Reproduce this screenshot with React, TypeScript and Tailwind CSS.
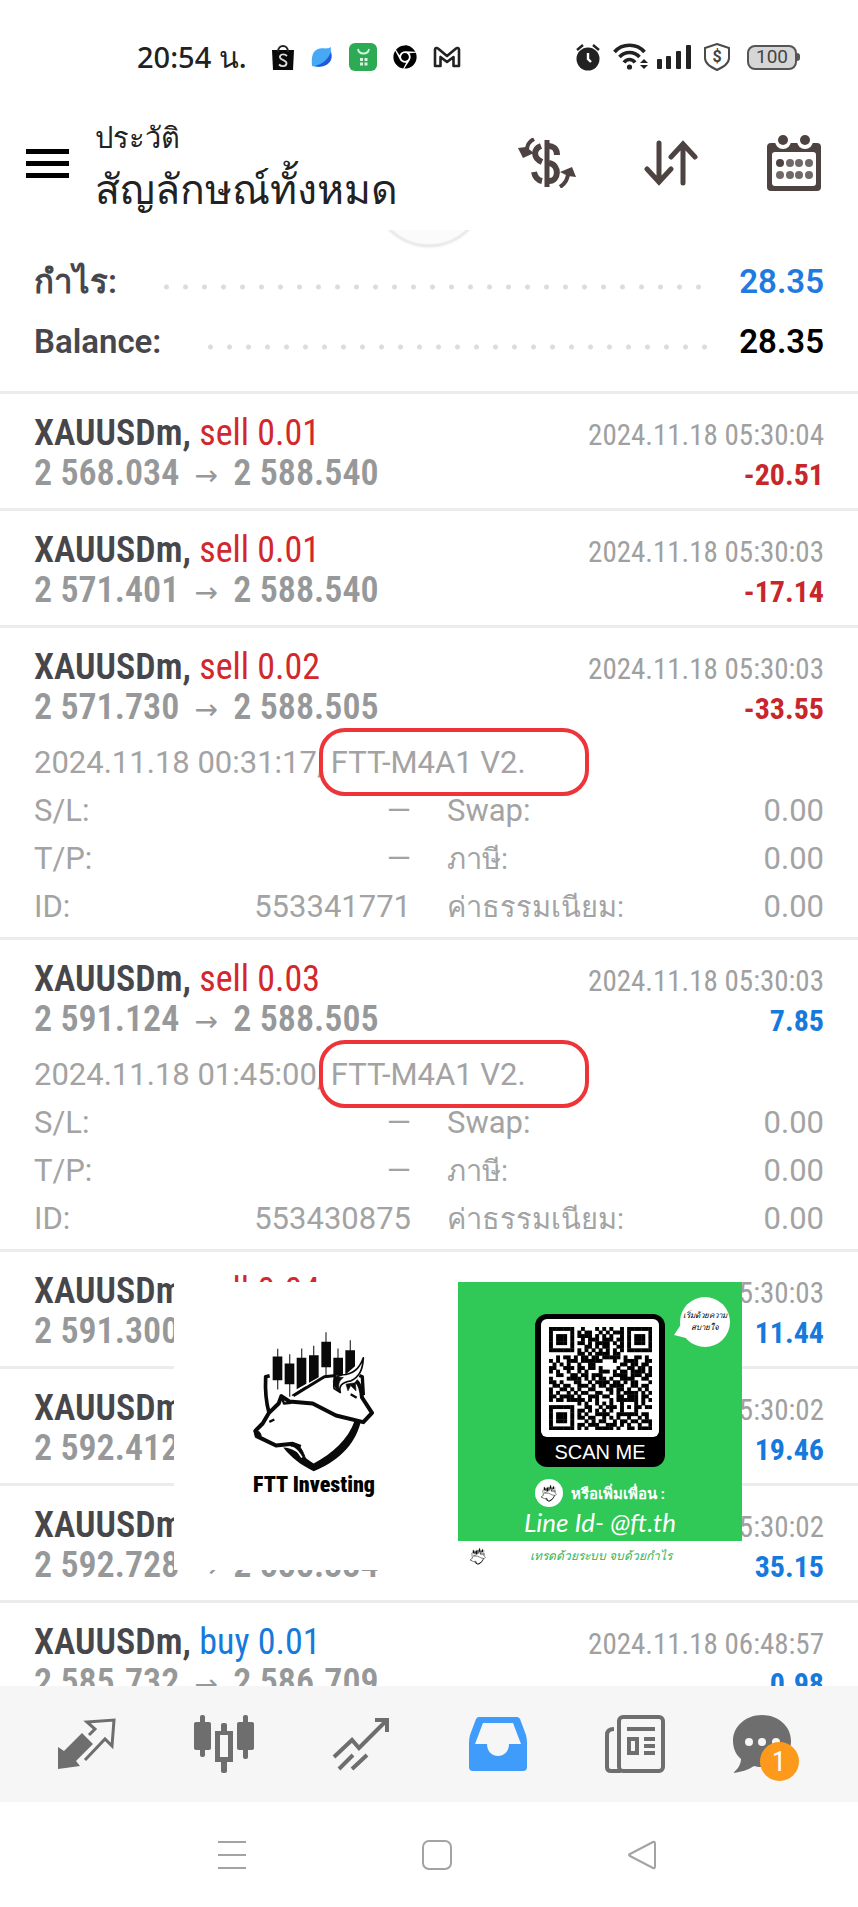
import type { ReactNode } from "react";
import { FaChrome } from "react-icons/fa";

interface Deal {
  readonly id: string;
  readonly side: "sell" | "buy";
  readonly volume: string;
  readonly open: string;
  readonly close: string;
  readonly time: string;
  readonly profit: string;
  readonly details?: {
    readonly openTime: string;
    readonly comment: string;
    readonly ticket: string;
  };
}

const DEALS: readonly Deal[] = [
  { id: "d1", side: "sell", volume: "0.01", open: "2 568.034", close: "2 588.540", time: "2024.11.18 05:30:04", profit: "-20.51" },
  { id: "d2", side: "sell", volume: "0.01", open: "2 571.401", close: "2 588.540", time: "2024.11.18 05:30:03", profit: "-17.14" },
  {
    id: "d3", side: "sell", volume: "0.02", open: "2 571.730", close: "2 588.505", time: "2024.11.18 05:30:03", profit: "-33.55",
    details: { openTime: "2024.11.18 00:31:17,", comment: "FTT-M4A1 V2.", ticket: "553341771" },
  },
  {
    id: "d4", side: "sell", volume: "0.03", open: "2 591.124", close: "2 588.505", time: "2024.11.18 05:30:03", profit: "7.85",
    details: { openTime: "2024.11.18 01:45:00,", comment: "FTT-M4A1 V2.", ticket: "553430875" },
  },
  { id: "d5", side: "sell", volume: "0.04", open: "2 591.300", close: "2 588.440", time: "2024.11.18 05:30:03", profit: "11.44" },
  { id: "d6", side: "sell", volume: "0.05", open: "2 592.412", close: "2 588.520", time: "2024.11.18 05:30:02", profit: "19.46" },
  { id: "d7", side: "sell", volume: "0.08", open: "2 592.728", close: "2 588.334", time: "2024.11.18 05:30:02", profit: "35.15" },
  { id: "d8", side: "buy", volume: "0.01", open: "2 585.732", close: "2 586.709", time: "2024.11.18 06:48:57", profit: "0.98" },
];

const QR_ROWS: readonly string[] = [
  "#######..#...#.#.#..#.#######",
  "#.....#.#.##..#.#.###.#.....#",
  "#.###.#.####.#.#.#..#.#.###.#",
  "#.###.#..#.###.###.##.#.###.#",
  "#.###.#.##.#.####.#.#.#.###.#",
  "#.....#...##.#.##..##.#.....#",
  "#######.#.#.#.#.#.#.#.#######",
  "........##.#.####.##.........",
  "..#.##.#.##.##.#####.#..##.#.",
  "#.#..###.######...#..####..##",
  ".#.#.#..#..##.......##.##.##.",
  "##..###.##.##.#....#..##.##.#",
  "#.#..#..#.#...###.#.##.####.#",
  "..##..##.##.###...####.###.##",
  "#....####.#.#.##.#..####..##.",
  "##.#...##..#.####.##.#.##...#",
  ".##.##..###.#.##.####..##.##.",
  "#..##.#.#..##...##.##.#..#.#.",
  "#.#..#.#.##..##..#.#.####.#.#",
  "##.####.#..###.##..##.###.##.",
  "#.##.#####.#.#...#.######.#.#",
  "........#.#..#.#.#..#...#.#..",
  "#######...##..#.###.#.#.##.##",
  "#.....#.##.#.#.#.#..#...#....",
  "#.###.#.#.#..####..######.##.",
  "#.###.#.##.##..#.#.#..#..#.#.",
  "#.###.#...#.#.##..#.##.##.###",
  "#.....#.##.###..###.#.#..#..#",
  "#######.#.#..#####.#..##.####",
];

function QrCode() {
  return (
    <svg viewBox="0 0 29 29" className="size-[103px]" role="img" aria-label="QR">
      {QR_ROWS.map((row, y) =>
        row.split("").map((cell, x) =>
          cell === "#" ? <rect key={`${x}-${y}`} x={x} y={y} width="1.100" height="1.100" fill="#000" /> : null
        )
      )}
    </svg>
  );
}

function BearBullLogo({ className }: { readonly className: string }) {
  return (
    <svg viewBox="275 210 378 428" className={className} fill="none" stroke="#0a0a0a" strokeLinejoin="round" aria-hidden="true">
      <g strokeWidth="4" stroke="#444">
        <path d="M355 266V388M391 282V410M427 265V300M463 257V300M500 216V348M536 265V300M573 240V290" />
      </g>
      <g fill="#0a0a0a" stroke="none">
        <path d="M340 289h29v71h-29zM376 310h29v62h-29zM412 293h29v78l-29 16zM449 285h29v66l-29 17zM486 245h29v76h-29zM522 293h29v54h-29zM558 270h29v48l-29 26z" />
        <path d="M372 562C400 560 440 596 463 610C520 580 565 540 586 482L604 486C585 560 530 605 463 633C425 615 395 592 372 562Z" />
      </g>
      <path d="M331 347L319 350C317 390 320 425 329 458" strokeWidth="11" />
      <path d="M402 407L495 350L530 346" strokeWidth="9" />
      <path d="M398 406L440 380" strokeWidth="4" />
      <path d="M600 346L609 350L612 405" strokeWidth="10" />
      <path d="M590 362C600 370 606 385 608 412L638 458L612 486L530 466L460 430L390 424L366 408L358 430L329 458L310 490L288 512L292 528L350 556L400 551L424 560" strokeWidth="12" />
      <path d="M524 385C520 350 535 345 560 343C590 335 602 320 612 293C610 330 600 350 575 362C545 366 538 380 543 397Z" fill="#fff" strokeWidth="5" />
      <path d="M524 350C518 372 526 385 543 397C534 376 538 362 552 352Z" fill="#0a0a0a" strokeWidth="2" />
      <path d="M560 372L566 392L574 376L590 392L588 368Z" fill="#0a0a0a" strokeWidth="2" />
      <path d="M574 402L592 413" strokeWidth="7" />
      <path d="M366 408L374 430L396 428" strokeWidth="7" />
      <path d="M330 485L345 478" strokeWidth="7" />
      <path d="M284 512L300 515L306 526L290 530Z" fill="#0a0a0a" strokeWidth="3" />
      <path d="M400 548C424 556 430 570 440 600C420 580 418 566 392 556Z" fill="#0a0a0a" strokeWidth="3" />
      <path d="M398 562C414 566 418 580 428 592" stroke="#fff" strokeWidth="5" />
    </svg>
  );
}

function StatusBar() {
  return (
    <div className="flex h-[114px] shrink-0 items-center pl-[137px] pr-[58px] text-[#222]">
      <span className="mr-6 font-['Noto_Sans'] text-[29px] font-medium leading-10">20:54 น.</span>
      <svg viewBox="0 0 24 27" className="mr-4 h-[27px] w-6" aria-hidden="true">
        <path d="M1 6h22l-1 20H2z" fill="#0a0a0a" />
        <path d="M7 8C7 0 17 0 17 8" fill="none" stroke="#222" strokeWidth="2" />
        <path d="M16 12C13 9 8.500 10.500 9 13.500C9.500 16.500 16 16 15.500 19.500C15 23 10 22.500 8 20.500" fill="none" stroke="#ddd" strokeWidth="1.800" />
      </svg>
      <svg viewBox="0 0 22 22" className="mr-4 size-[22px]" aria-hidden="true">
        <path d="M1 20C0 10 2 5 7 3C11 1 15 4 20 1C19 5 22 10 19 15C15 21 8 22 1 20Z" fill="#45a9f5" />
        <path d="M20 6C22 13 19 17 15 19C11 21 6 21 4 20C12 18 17 13 20 6Z" fill="#2458dc" />
      </svg>
      <svg viewBox="0 0 28 28" className="mr-4 size-7" aria-hidden="true">
        <rect width="28" height="28" rx="6" fill="#2cab54" />
        <path d="M9 6C10 12 19 12 20 6" fill="none" stroke="#d6f3df" strokeWidth="1.800" />
        <path d="M11 15h3v3h-3zM15.500 15h3v3h-3zM11 19.500h3v3h-3zM15.500 19.500h3v3h-3z" fill="#d6f3df" />
      </svg>
      <FaChrome className="mr-4 size-6 text-black" />
      <svg viewBox="0 0 28 22" className="h-[22px] w-7" fill="none" stroke="#222" strokeWidth="2.600" strokeLinejoin="round" aria-hidden="true">
        <path d="M2 3.500C2 2 4 1.500 5 2.500L14 10L23 2.500C24 1.500 26 2 26 3.500V20H20.500V11L14 16L7.500 11V20H2Z" />
      </svg>
      <div className="ml-auto flex items-center gap-3">
        <svg viewBox="0 0 26 28" className="h-7 w-[26px]" aria-hidden="true">
          <circle cx="13" cy="16" r="11.500" fill="#222" />
          <path d="M2 7L8 2M24 7L18 2" stroke="#222" strokeWidth="2.400" />
          <path d="M13 10V16L16 19" fill="none" stroke="#fff" strokeWidth="2.400" />
        </svg>
        <svg viewBox="0 0 36 28" className="-mr-1 h-7 w-9" fill="none" stroke="#222" strokeWidth="3.600" aria-hidden="true">
          <path d="M1.500 9C9 0 24 0 31.500 9M6.500 14C12 8 21 8 26.500 14M11 19.500C14 15.500 19 15.500 22 19.500" />
          <circle cx="16.500" cy="24" r="2.600" fill="#222" stroke="none" />
          <path d="M27 20L31 16L35 20ZM27 22L31 26L35 22Z" fill="#222" stroke="none" />
        </svg>
        <svg viewBox="0 0 34 26" className="h-[26px] w-[34px]" fill="#222" aria-hidden="true">
          <rect x="0" y="15" width="5" height="10" rx="1" />
          <rect x="9" y="12" width="5" height="13" rx="1" />
          <rect x="19" y="7" width="5" height="18" rx="1" />
          <rect x="29" y="1" width="5" height="24" rx="1" />
        </svg>
        <div className="relative flex h-7 w-7 items-center justify-center">
          <svg viewBox="0 0 28 28" className="absolute inset-0 size-7" fill="none" stroke="#4a4a4a" strokeWidth="2" aria-hidden="true">
            <path d="M14 1L26 5V15C26 21 20 24 14 27C8 24 2 21 2 15V5Z" />
          </svg>
          <span className="font-['Roboto'] text-[16px] font-bold leading-5 text-[#444]">$</span>
        </div>
        <div className="ml-1 flex items-center">
          <span className="flex h-[25px] w-[50px] items-center justify-center rounded-lg border-2 border-[#555] bg-[#d6d6d6] font-['Roboto'] text-[19px] leading-5 text-[#444]">
            100
          </span>
          <span className="h-2 w-[3px] rounded-r bg-[#555]" />
        </div>
      </div>
    </div>
  );
}

function AppHeader() {
  return (
    <header className="flex h-[116px] shrink-0 items-center pl-[26px] pr-9 pb-[18px]">
      <button type="button" aria-label="Menu" className="flex w-[43px] flex-col gap-[7px]">
        <span className="h-[5px] bg-black" />
        <span className="h-[5px] bg-black" />
        <span className="h-[5px] bg-black" />
      </button>
      <div className="ml-[26px] font-['Noto_Sans'] text-[#222]">
        <p className="text-[29px] leading-[50px]">ประวัติ</p>
        <h1 className="text-[41px] leading-[52px]">สัญลักษณ์ทั้งหมด</h1>
      </div>
      <div className="ml-auto flex items-center text-[#4d4341]">
        <button type="button" aria-label="Currency">
          <svg viewBox="0 0 58 50" className="h-[50px] w-[58px]" fill="none" stroke="currentColor" strokeWidth="6" aria-hidden="true">
            <path d="M29 2V49" strokeWidth="5" />
            <path d="M39 17C39 10 34 8 31 8M23 8C15 11 15 20 24 24M31 25C42 27 41 43 31 43M24 43C19 42 17 39 16 34" />
            <path d="M16 1C10 4 9 8 9 12" strokeWidth="4" />
            <path d="M0 10L5 20L16 15L8 9Z" fill="currentColor" stroke="none" />
            <path d="M42 49C48 45 49 41 50 37" strokeWidth="4" />
            <path d="M42 34L54 29L58 39L50 38Z" fill="currentColor" stroke="none" />
          </svg>
        </button>
        <button type="button" aria-label="Sort" className="ml-[68px]">
          <svg viewBox="0 0 54 46" className="h-[46px] w-[54px]" fill="none" stroke="currentColor" strokeWidth="5" strokeLinecap="round" aria-hidden="true">
            <path d="M15 3V42M3 29L15 42L27 29M39 43V4M27 17L39 4L51 17" />
          </svg>
        </button>
        <button type="button" aria-label="Calendar" className="ml-[68px]">
          <svg viewBox="0 0 56 58" className="h-[58px] w-14" fill="currentColor" aria-hidden="true">
            <path fillRule="evenodd" d="M5 9H51Q55 9 55 13V53Q55 57 51 57H5Q1 57 1 53V13Q1 9 5 9ZM9 18Q6 18 6 21V49Q6 52 9 52H47Q50 52 50 49V21Q50 18 47 18Z" />
            <circle cx="17" cy="7" r="8" fill="#fff" />
            <circle cx="39" cy="7" r="8" fill="#fff" />
            <circle cx="17" cy="6" r="5" />
            <circle cx="39" cy="6" r="5" />
            {[14, 24, 33, 43].map((x) => (
              <g key={x}>
                <circle cx={x} cy="29" r="4" opacity={x === 14 ? 1 : 0.8} />
                <circle cx={x} cy="41" r="4" opacity="0.8" />
              </g>
            ))}
          </svg>
        </button>
      </div>
    </header>
  );
}

function SummaryRow({ label, value, valueClass }: { readonly label: string; readonly value: string; readonly valueClass: string }) {
  return (
    <div className="flex h-[60px] items-center text-[33px] font-semibold leading-[60px]">
      <span className="text-[#47474b]">{label}</span>
      <span className="ml-10 mr-7 mt-[10px] h-[6px] flex-1 bg-[radial-gradient(circle,#dcdcdc_2px,transparent_3px)] bg-[length:19px_6px] bg-repeat-x" />
      <span className={valueClass}>{value}</span>
    </div>
  );
}

function DetailCell({ label, value, thai = false }: { readonly label: string; readonly value: string; readonly thai?: boolean }) {
  return (
    <div className="flex h-12 justify-between">
      <dt className={thai ? "text-[29px]" : ""}>{label}</dt>
      <dd>{value}</dd>
    </div>
  );
}

function DealRow({ deal }: { readonly deal: Deal }) {
  return (
    <li className="border-b-[3px] border-[#ececec] px-[34px] pt-[19px] font-['Roboto_Condensed',Roboto,sans-serif]">
      <div className="flex h-10 items-baseline justify-between leading-10">
        <span className="text-[36px] font-semibold text-[#47474b]">
          XAUUSDm,{" "}
          <span className={deal.side === "sell" ? "font-normal text-[#d2282d]" : "font-normal text-[#1779dc]"}>
            {deal.side} {deal.volume}
          </span>
        </span>
        <span className="text-[29px] text-[#a0a0a0]">{deal.time}</span>
      </div>
      <div className="flex h-10 items-baseline justify-between font-semibold leading-10">
        <span className="text-[36px] text-[#969899]">
          {deal.open} <span className="mx-[7px] font-['DejaVu_Sans'] text-[28px] font-normal leading-8">→</span> {deal.close}
        </span>
        <span className={deal.profit.startsWith("-") ? "text-[30px] font-bold text-[#c8262b]" : "text-[30px] font-bold text-[#1779dc]"}>
          {deal.profit}
        </span>
      </div>
      {deal.details ? (
        <div className="pb-[6px] pt-3 font-['Roboto'] text-[31px] leading-[48px] text-[#a3a3a3]">
          <p className="h-12">
            {deal.details.openTime}{" "}
            <span className="relative inline-block">
              {deal.details.comment}
              <span className="absolute -left-3 -top-[11px] h-[68px] w-[270px] rounded-[26px] border-4 border-[#ee3438]" />
            </span>
          </p>
          <dl className="grid grid-cols-2 gap-x-9">
            <DetailCell label="S/L:" value="—" />
            <DetailCell label="Swap:" value="0.00" />
            <DetailCell label="T/P:" value="—" />
            <DetailCell label="ภาษี:" value="0.00" thai />
            <DetailCell label="ID:" value={deal.details.ticket} />
            <DetailCell label="ค่าธรรมเนียม:" value="0.00" thai />
          </dl>
        </div>
      ) : (
        <div className="h-[15px]" />
      )}
    </li>
  );
}

function PromoCard() {
  return (
    <aside className="absolute left-[174px] right-[116px] top-[1052px] flex h-[288px] bg-white">
      <div className="flex flex-1 flex-col items-center pr-1 pt-12">
        <BearBullLogo className="h-[143px] w-[126px]" />
        <p className="font-['Roboto_Condensed',Roboto,sans-serif] text-[22px] font-black leading-6 text-black">FTT Investing</p>
      </div>
      <div className="w-[284px]">
        <div className="relative flex h-[259px] flex-col items-center bg-[#30c857] pt-8 text-white">
          <div className="flex w-[130px] flex-col items-center rounded-xl bg-black p-[5px] pb-0">
            <div className="flex size-[118px] items-center justify-center rounded-md bg-white">
              <QrCode />
            </div>
            <p className="font-['Liberation_Sans'] text-[20px] leading-[30px]">SCAN ME</p>
          </div>
          <div className="mt-3 flex h-7 items-center gap-2">
            <span className="flex size-7 items-center justify-center rounded-full bg-white">
              <BearBullLogo className="h-[18px] w-4" />
            </span>
            <span className="font-['Noto_Sans'] text-[15px] font-semibold leading-7">หรือเพิ่มเพื่อน :</span>
          </div>
          <p className="font-['Lato'] text-[26px] italic leading-[30px]">Line Id- @ft.th</p>
          <div className="absolute right-3 top-[15px] flex h-[50px] w-[50px] items-center justify-center">
            <svg viewBox="0 0 56 50" className="absolute right-0 top-0 h-[50px] w-14" fill="#fff" aria-hidden="true">
              <circle cx="31" cy="25" r="25" />
              <path d="M8 26L0 38L16 42Z" />
            </svg>
            <div className="relative flex flex-col items-center whitespace-nowrap text-[8px] font-medium italic leading-3 text-black">
              <span>เริ่มด้วยความ</span>
              <span>สบายใจ</span>
            </div>
          </div>
        </div>
        <div className="flex h-[29px] items-center pl-3">
          <BearBullLogo className="h-[18px] w-4" />
          <p className="ml-11 text-[12px] font-medium italic leading-7 text-[#2fb457]">เทรดด้วยระบบ จบด้วยกำไร</p>
        </div>
      </div>
    </aside>
  );
}

function TabButton({ label, children }: { readonly label: string; readonly children: ReactNode }) {
  return (
    <button type="button" aria-label={label} className="flex flex-1 items-center justify-center text-[#6e6e6e]">
      {children}
    </button>
  );
}

function TabBar() {
  return (
    <nav className="flex h-[116px] shrink-0 bg-[#f6f6f6] px-[18px]">
      <TabButton label="Quotes">
        <svg viewBox="0 0 60 52" className="h-[52px] w-[60px]" fill="none" stroke="currentColor" strokeWidth="3" aria-hidden="true">
          <path d="M1 29L7 33L25 15L36 26L19 43L23 48L1 51Z" fill="currentColor" stroke="none" />
          <path d="M32 17L38 11L30 4L57 2L55 28L48 21L28 42" />
        </svg>
      </TabButton>
      <TabButton label="Charts">
        <svg viewBox="0 0 60 60" className="size-[60px]" fill="currentColor" aria-hidden="true">
          <rect x="6" y="1" width="5" height="42" rx="2" />
          <rect x="0" y="8" width="17" height="28" rx="2" />
          <rect x="49" y="1" width="5" height="44" rx="2" />
          <rect x="43" y="8" width="17" height="28" rx="2" />
          <rect x="27" y="9" width="6" height="10" rx="2" />
          <rect x="27" y="46" width="6" height="13" rx="2" />
          <path fillRule="evenodd" d="M21 17h18v31H21zM26 21v22h8V21z" />
        </svg>
      </TabButton>
      <TabButton label="Trade">
        <svg viewBox="0 0 58 54" className="h-[54px] w-[58px]" fill="none" stroke="currentColor" strokeWidth="4" aria-hidden="true">
          <path d="M2 40L20 23L27 31L54 4M43 3H55V15M7 52L21 38M20 52L35 38" />
        </svg>
      </TabButton>
      <TabButton label="History">
        <svg viewBox="0 0 58 54" className="h-[54px] w-[58px]" aria-hidden="true">
          <path fillRule="evenodd" d="M10 0H48Q50 0 51 2L57 18Q58 22 58 26V50Q58 54 54 54H4Q0 54 0 50V26Q0 22 1 18L7 2Q8 0 10 0ZM14 6L6 27H18C18 43 40 43 40 27H52L44 6Z" fill="#409cfb" />
        </svg>
      </TabButton>
      <TabButton label="News">
        <svg viewBox="0 0 60 58" className="h-[58px] w-[60px]" fill="none" stroke="currentColor" strokeWidth="4" aria-hidden="true">
          <rect x="14" y="2" width="44" height="54" rx="4" />
          <path d="M9 14Q2 14 2 20V52Q2 56 6 56H16" />
          <path d="M22 14H50M39 24H50M39 31H50M39 38H50" />
          <rect x="24" y="24" width="8" height="14" />
        </svg>
      </TabButton>
      <TabButton label="Messages">
        <span className="relative mr-5">
          <svg viewBox="0 0 58 58" className="size-[58px]" fill="currentColor" aria-hidden="true">
            <path d="M29 0C45 0 58 11 58 26C58 41 45 52 31 52C27 52 24 52 21 51C15 55 8 57 0 58C5 54 8 49 8 44C3 40 0 33 0 26C0 11 13 0 29 0Z" />
            <circle cx="16" cy="27" r="4" fill="#f6f6f6" />
            <circle cx="29" cy="27" r="4" fill="#f6f6f6" />
            <circle cx="43" cy="27" r="4" fill="#f6f6f6" />
          </svg>
          <span className="absolute -bottom-2 -right-2 flex size-[39px] items-center justify-center rounded-full bg-[#fd9a1c] font-['Roboto_Condensed',Roboto,sans-serif] text-[28px] leading-8 text-white">
            1
          </span>
        </span>
      </TabButton>
    </nav>
  );
}

function SystemNav() {
  return (
    <div className="flex h-[105px] shrink-0 items-center justify-center gap-[175px] pl-4 text-[#a3a3a3]">
      <button type="button" aria-label="Recents">
        <svg viewBox="0 0 30 30" className="size-[30px]" stroke="currentColor" strokeWidth="2" aria-hidden="true">
          <path d="M1 2H29M1 15H29M1 28H29" />
        </svg>
      </button>
      <button type="button" aria-label="Home">
        <svg viewBox="0 0 30 30" className="size-[30px]" fill="none" stroke="currentColor" strokeWidth="2" aria-hidden="true">
          <rect x="1" y="1" width="28" height="28" rx="6" />
        </svg>
      </button>
      <button type="button" aria-label="Back">
        <svg viewBox="0 0 30 30" className="size-[30px]" fill="none" stroke="currentColor" strokeWidth="2" strokeLinejoin="round" aria-hidden="true">
          <path d="M26 2Q28 1 28 4V26Q28 29 26 28L3 16Q1 15 3 14Z" />
        </svg>
      </button>
    </div>
  );
}

export default function App() {
  return (
    <div className="flex h-screen flex-col overflow-hidden bg-white font-['Roboto','Noto_Sans',sans-serif]">
      <StatusBar />
      <AppHeader />
      <main className="relative flex-1 overflow-hidden">
        <span className="absolute -top-24 left-1/2 size-28 -translate-x-1/2 rounded-full border-2 border-[#ededed] bg-[#fbfbfb] shadow-sm" />
        <section className="relative border-b-[3px] border-[#ececec] px-[34px] pb-[19px] pt-[22px]">
          <SummaryRow label="กำไร:" value="28.35" valueClass="text-[#1f7be0]" />
          <SummaryRow label="Balance:" value="28.35" valueClass="text-black" />
        </section>
        <ul>
          {DEALS.map((deal) => (
            <DealRow key={deal.id} deal={deal} />
          ))}
        </ul>
        <PromoCard />
      </main>
      <TabBar />
      <SystemNav />
    </div>
  );
}
